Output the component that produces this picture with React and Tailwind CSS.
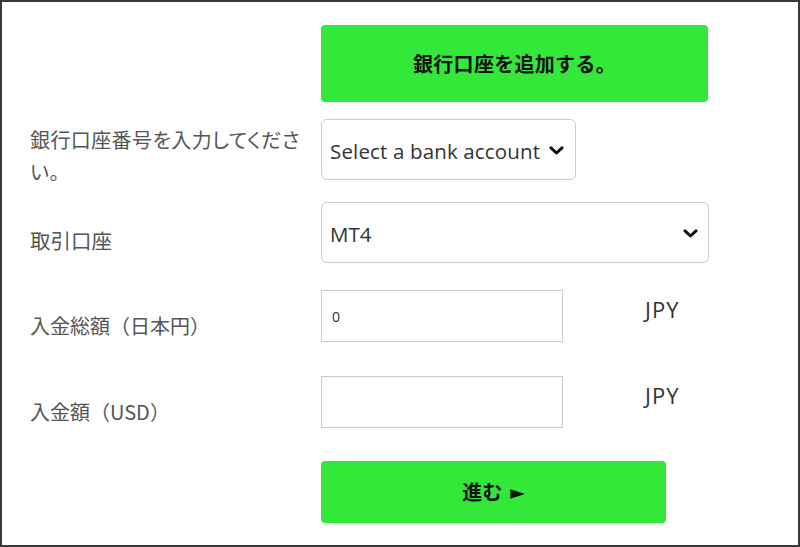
import React from "react";

const Chevron = () => (
  <svg width="15" height="9" viewBox="0 0 15 9" className="shrink-0">
    <polyline points="2,1.8 7.5,7 13,1.8" fill="none" stroke="#111" strokeWidth="3" strokeLinecap="round" strokeLinejoin="round" />
  </svg>
);

export default function App() {
  const jp = { fontFamily: '"Noto Sans CJK JP", "Noto Sans", sans-serif' };
  const ui = { fontFamily: '"Open Sans", "Noto Sans CJK JP", sans-serif' };
  return (
    <div className="w-[800px] h-[547px] border-2 border-[#3a3a3a] bg-white overflow-hidden" style={jp}>
      <div className="flex flex-col pl-[28px] pt-[23px]">
        {/* Row 1 */}
        <div className="flex">
          <div className="w-[291px] shrink-0" />
          <button className="w-[387px] h-[77px] rounded-[4px] bg-[#34e83a] text-[#111] font-bold text-[20px] tracking-[0.3px] flex items-center justify-center">
            銀行口座を追加する。
          </button>
        </div>
        {/* Row 2 */}
        <div className="flex mt-[17px]">
          <div
            className="w-[291px] h-[61px] shrink-0 pt-[5px] text-[20px] leading-[32px] text-[#555] tracking-[0.4px] whitespace-nowrap"
            style={{ fontFeatureSettings: '"palt"' }}
          >
            銀行口座番号を入力してくださ
            <br />
            い。
          </div>
          <div className="w-[255px] h-[61px] rounded-[6px] border border-[#ccc] flex items-center justify-between pl-[8px] pr-[11px] pt-[4px]" style={ui}>
            <span className="text-[20.5px] text-[#333] tracking-[0.15px]">Select a bank account</span>
            <span className="pb-[3px]"><Chevron /></span>
          </div>
        </div>
        {/* Row 3 */}
        <div className="flex mt-[22px]">
          <div className="w-[291px] shrink-0 pt-[22px] text-[20.5px] leading-[32px] text-[#555]">取引口座</div>
          <div className="w-[388px] h-[61px] rounded-[6px] border border-[#ccc] flex items-center justify-between pl-[8px] pr-[10px] pt-[4px]" style={ui}>
            <span className="text-[20.5px] text-[#333]">MT4</span>
            <span className="pb-[3px]"><Chevron /></span>
          </div>
        </div>
        {/* Row 4 */}
        <div className="flex mt-[27px]">
          <div className="w-[291px] shrink-0 pt-[20px] text-[20px] leading-[32px] text-[#555]">入金総額（日本円）</div>
          <div className="w-[242px] h-[52px] border border-[#ccc] flex items-center pl-[10px]" style={ui}>
            <span className="text-[14px] text-[#333]">0</span>
          </div>
          <div className="ml-[82px] pt-[3px] text-[22px] tracking-[1px] text-[#333]" style={ui}>JPY</div>
        </div>
        {/* Row 5 */}
        <div className="flex mt-[34px]">
          <div className="w-[291px] shrink-0 pt-[20px] text-[20px] leading-[32px] text-[#555]">入金額（USD）</div>
          <div className="w-[242px] h-[52px] border border-[#ccc]" />
          <div className="ml-[82px] pt-[3px] text-[22px] tracking-[1px] text-[#333]" style={ui}>JPY</div>
        </div>
        {/* Row 6 */}
        <div className="flex mt-[33px]">
          <div className="w-[291px] shrink-0" />
          <button className="w-[345px] h-[62px] rounded-[4px] bg-[#34e83a] text-[#111] font-bold text-[20px] flex items-center justify-center gap-[8px]">
            <span>進む</span>
            <span className="text-[19px]" style={{ fontFamily: '"DejaVu Sans", sans-serif' }}>►</span>
          </button>
        </div>
      </div>
    </div>
  );
}
